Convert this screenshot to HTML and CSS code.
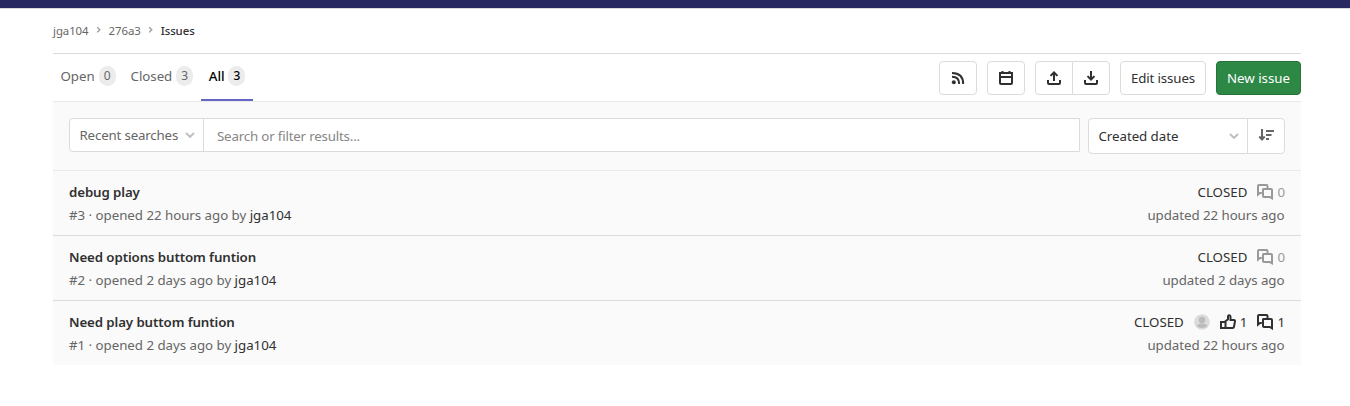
FILE: index.html
```html
<!DOCTYPE html>
<html lang="en">
<head>
<meta charset="utf-8">
<title>Issues</title>
<link rel="stylesheet" href="styles.css">
</head>
<body>
<svg class="sprite" aria-hidden="true">
  <symbol id="chevron-right" viewBox="0 0 8 8"><path d="M2.200 1.200l2.600 2.600-2.600 2.600" fill="none" stroke="currentColor" stroke-width="1.300"/></symbol>
  <symbol id="chevron-down" viewBox="0 0 10 7"><path d="M1.500 1.500L5 4.900l3.500-3.400" fill="none" stroke="currentColor" stroke-width="2" stroke-linecap="round"/></symbol>
  <symbol id="comments" viewBox="0 0 16 16"><path d="M4.800 9H3l-2 1.600V2a1 1 0 0 1 1-1h7.500a1 1 0 0 1 1 1v2.500M6.500 5H14a1 1 0 0 1 1 1v8.300L12.800 13H7a1 1 0 0 1-1-1V5.500z" fill="none" stroke="currentColor" stroke-width="2"/></symbol>
  <symbol id="thumb-up" viewBox="0 0 16 16"><path d="M5.500 14H1V8h3.500L8 5.300V2.500c0-1.700 2.500-1.600 2.500.2V6H14q1.200 0 1 1.200l-1 5.600q-.2 1.200-1.500 1.200H5.500V8" fill="none" stroke="currentColor" stroke-width="2"/></symbol>
</svg>
<header class="topbar"></header>
<main class="container">
  <nav class="breadcrumbs">
    <a class="crumb">jga104</a>
    <svg class="crumb-sep"><use href="#chevron-right"/></svg>
    <a class="crumb">276a3</a>
    <svg class="crumb-sep"><use href="#chevron-right"/></svg>
    <a class="crumb crumb-current">Issues</a>
  </nav>
  <div class="top-area">
    <div class="tabs">
      <a class="tab"><span>Open</span><span class="badge">0</span></a>
      <a class="tab"><span>Closed</span><span class="badge">3</span></a>
      <a class="tab active"><span>All</span><span class="badge">3</span></a>
    </div>
    <div class="controls">
      <button class="btn btn-icon"><svg class="i16" viewBox="0 0 16 16"><circle cx="3.800" cy="12.200" r="2" fill="currentColor"/><path d="M2 6.800q7.200 0 7.200 7.200M2 3q11.200 0 11.200 11" fill="none" stroke="currentColor" stroke-width="2"/></svg></button>
      <button class="btn btn-icon"><svg class="i16" viewBox="0 0 16 16"><path d="M2 3h12v10a1 1 0 0 1-1 1H3a1 1 0 0 1-1-1zM2 7h12M4.500 1v3M11.500 1v3" fill="none" stroke="currentColor" stroke-width="2"/></svg></button>
      <div class="btn-group">
        <button class="btn btn-icon"><svg class="i16" viewBox="0 0 16 16"><path d="M2 10v3a1 1 0 0 0 1 1h10a1 1 0 0 0 1-1v-3M8 11V3M4.500 5.900L8 2.500l3.500 3.400" fill="none" stroke="currentColor" stroke-width="2"/></svg></button>
        <button class="btn btn-icon"><svg class="i16" viewBox="0 0 16 16"><path d="M2 10v3a1 1 0 0 0 1 1h10a1 1 0 0 0 1-1v-3M8 1v8M4.500 6.100L8 9.500l3.500-3.400" fill="none" stroke="currentColor" stroke-width="2"/></svg></button>
      </div>
      <button class="btn btn-edit">Edit issues</button>
      <button class="btn btn-new">New issue</button>
    </div>
  </div>
  <div class="filters">
    <div class="search-box">
      <div class="recent"><span>Recent searches</span><svg class="caret"><use href="#chevron-down"/></svg></div>
      <div class="search-input">Search or filter results...</div>
    </div>
    <div class="sort-box">
      <div class="sort-by"><span>Created date</span><svg class="caret"><use href="#chevron-down"/></svg></div>
      <div class="sort-dir"><svg class="i16" viewBox="0 0 16 16"><path d="M4 1v10M1.300 8.500L4 11.500l2.700-3M8 3h8M8 7h5.500M8 11h3" fill="none" stroke="currentColor" stroke-width="2"/></svg></div>
    </div>
  </div>
  <ul class="issues">
    <li class="issue">
      <div class="info"><div class="title">debug play</div><div class="meta">#3 · opened 22 hours ago by <a>jga104</a></div></div>
      <div class="status"><div class="stats"><span class="closed">CLOSED</span><span class="stat muted"><svg class="i16"><use href="#comments"/></svg>0</span></div><div class="updated">updated 22 hours ago</div></div>
    </li>
    <li class="issue">
      <div class="info"><div class="title">Need options buttom funtion</div><div class="meta">#2 · opened 2 days ago by <a>jga104</a></div></div>
      <div class="status"><div class="stats"><span class="closed">CLOSED</span><span class="stat muted"><svg class="i16"><use href="#comments"/></svg>0</span></div><div class="updated">updated 2 days ago</div></div>
    </li>
    <li class="issue">
      <div class="info"><div class="title">Need play buttom funtion</div><div class="meta">#1 · opened 2 days ago by <a>jga104</a></div></div>
      <div class="status"><div class="stats"><span class="closed">CLOSED</span><svg class="avatar" viewBox="0 0 16 16"><circle cx="8" cy="8" r="7.800" fill="#dcdcdc"/><circle cx="8" cy="6" r="3.300" fill="#bcbcbc"/><path d="M2.500 11.500q2-1.500 4-2h3q2 .5 4 2-2.200 2.500-5.500 2.500t-5.500-2.500z" fill="#bcbcbc"/></svg><span class="stat"><svg class="i16"><use href="#thumb-up"/></svg>1</span><span class="stat"><svg class="i16"><use href="#comments"/></svg>1</span></div><div class="updated">updated 22 hours ago</div></div>
    </li>
  </ul>
</main>
</body>
</html>
```
FILE: styles.css
```css
* { box-sizing: border-box; }
body {
  margin: 0;
  background: #fff;
  color: #303030;
  font: 13.3px/20px "Noto Sans", "Open Sans", sans-serif;
}
.sprite { display: none; }
.topbar { height: 9px; background: #292961; border-bottom: 1px solid #dbdbdb; }
.container { width: 1248px; margin-left: 53px; }
.breadcrumbs {
  display: flex;
  align-items: center;
  height: 45px;
  border-bottom: 1px solid #dbdbdb;
  font-size: 11.4px;
  letter-spacing: -0.06px;
  color: #666;
}
.crumb-sep { width: 8px; height: 8px; margin: 0 6px 2px; color: #999; }
.crumb-current { color: #303030; font-weight: 500; }
.top-area {
  display: flex;
  justify-content: space-between;
  height: 48px;
  border-bottom: 1px solid #eaeaea;
}
.tabs { display: flex; color: #666; letter-spacing: -0.05px; }
.tab {
  display: flex;
  align-items: center;
  gap: 4px;
  height: 47px;
  padding: 0 7.5px 3px;
}
.tab.active { padding: 0 8px 1px; color: #000; font-weight: 500; border-bottom: 2px solid #6666c4; }
.badge {
  min-width: 17px;
  height: 20px;
  border-radius: 8.5px;
  background: #ececec;
  font-size: 12px;
  text-align: center;
}
.controls { display: flex; gap: 10px; padding-top: 7px; }
.btn {
  display: flex;
  align-items: center;
  justify-content: center;
  height: 34px;
  padding: 0;
  border: 1px solid #dbdbdb;
  border-radius: 4px;
  background: #fff;
  color: #303030;
  font: inherit;
  white-space: nowrap;
}
.btn-icon { width: 38px; }
.btn-group { display: flex; }
.btn-group .btn:first-child { border-radius: 4px 0 0 4px; }
.btn-group .btn:last-child { margin-left: -1px; border-radius: 0 4px 4px 0; }
.btn-edit { width: 86px; letter-spacing: -0.12px; }
.btn-new { width: 85px; background: #2d8745; border-color: #24743a; color: #fff; }
.i16 { display: block; width: 16px; height: 16px; }
.filters {
  display: flex;
  gap: 8px;
  height: 69px;
  padding: 16px;
  background: #fafafa;
  border-bottom: 1px solid #eaeaea;
}
.search-box {
  display: flex;
  flex: 1;
  height: 34px;
  border: 1px solid #dbdbdb;
  border-radius: 4px 0 0 4px;
  background: #fff;
}
.recent {
  display: flex;
  align-items: center;
  justify-content: space-between;
  width: 134px;
  padding: 0 8px 0 9.500px;
  border-right: 1px solid #dbdbdb;
  color: #666;
  letter-spacing: -0.17px;
}
.caret { width: 10px; height: 7px; margin-top: 1px; color: #bfbfbf; }
.search-input { padding: 7px 13px; color: #868686; letter-spacing: -0.18px; }
.sort-box {
  display: flex;
  width: 197px;
  height: 36px;
  border: 1px solid #dbdbdb;
  border-radius: 4px;
  background: #fff;
}
.sort-by {
  display: flex;
  flex: 1;
  align-items: center;
  justify-content: space-between;
  padding: 0 8.500px 0 9.500px;
  border-right: 1px solid #dbdbdb;
  letter-spacing: -0.05px;
}
.sort-dir { display: flex; align-items: center; justify-content: center; width: 36px; color: #666; }
.issues { margin: 0; padding: 0; list-style: none; background: #fafafa; }
.issue {
  display: flex;
  justify-content: space-between;
  height: 65px;
  padding: 11px 16px 0;
  border-bottom: 1px solid #dbdbdb;
}
.issue:last-child { height: 64px; border-bottom: 0; }
.title { font-weight: 600; letter-spacing: -0.11px; margin-bottom: 3px; }
.meta, .updated { color: #666; letter-spacing: -0.03px; }
.meta a { color: #303030; }
.updated { padding-right: 0.500px; letter-spacing: -0.05px; }
.status { text-align: right; }
.stats { display: flex; justify-content: flex-end; align-items: center; height: 20px; margin-bottom: 3px; gap: 10px; }
.stat { display: flex; align-items: center; gap: 4px; }
.stat.muted { color: #999; }
.avatar { width: 16px; height: 16px; }
```
